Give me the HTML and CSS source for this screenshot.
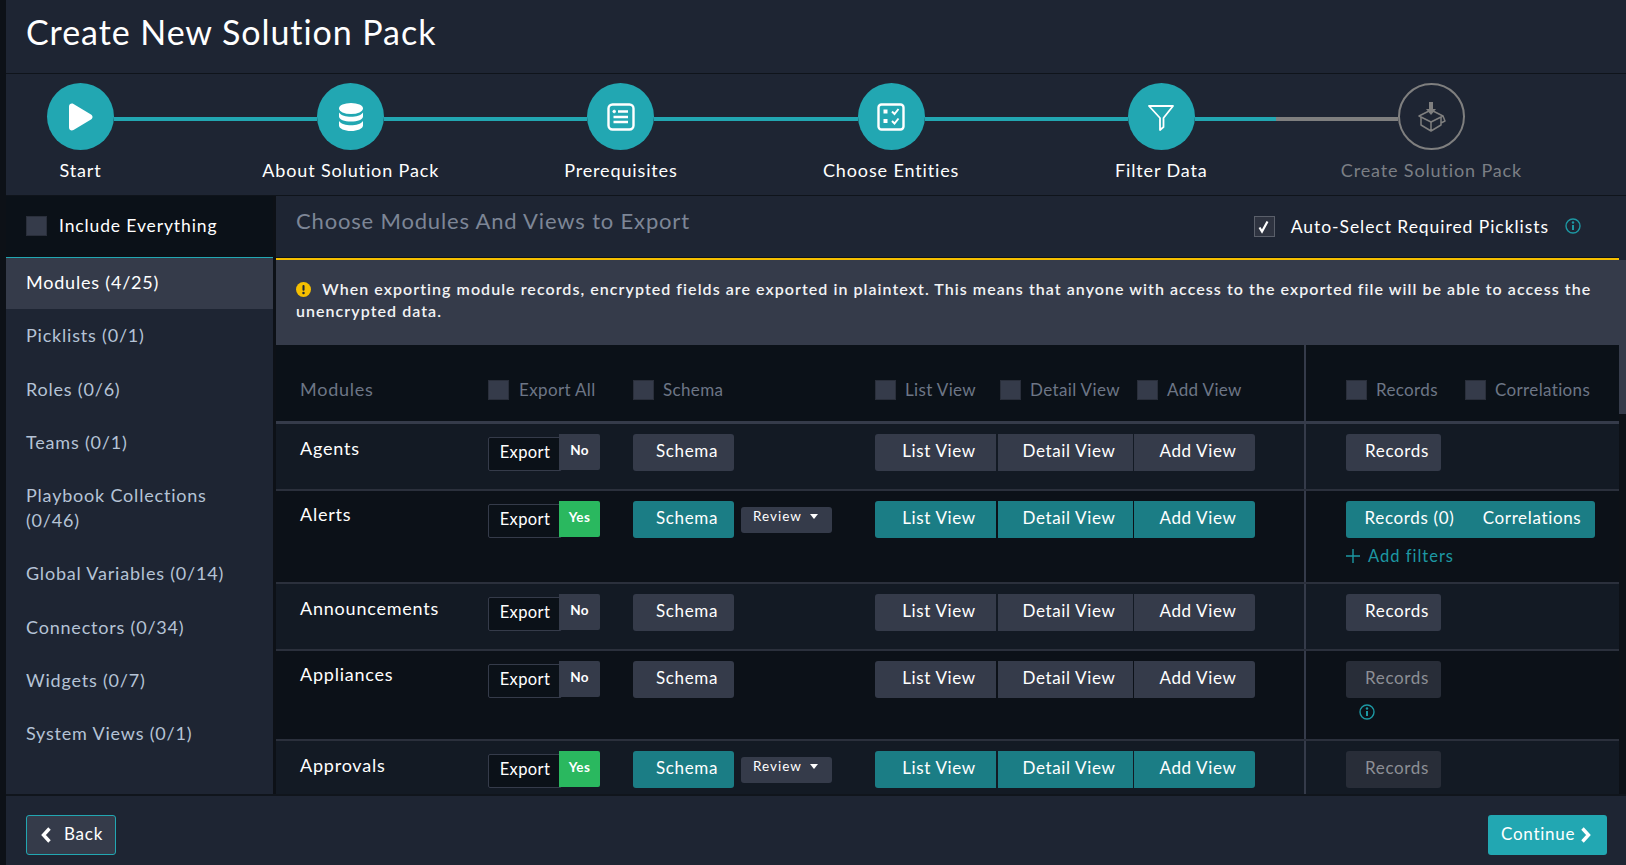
FILE: index.html
```html
<!DOCTYPE html>
<html lang="en">
<head>
<meta charset="utf-8">
<title>Create New Solution Pack</title>
<link rel="stylesheet" href="styles.css">
</head>
<body>
<div class="app">
  <header class="top"><h1>Create New Solution Pack</h1></header>

  <nav class="steps">
    <div class="step">
      <div class="track"><span class="circle"><svg viewBox="0 0 25 28" width="25" height="28"><path d="M1 3.500C1 1 3.500-.2 5.500 1L23 11.500c2 1.300 2 3.700 0 5L5.500 27c-2 1.200-4.500 0-4.500-2.500z" fill="#fff"/></svg></span><span class="line"></span></div>
      <div class="step-label">Start</div>
    </div>
    <div class="step">
      <div class="track"><span class="circle"><svg viewBox="0 0 24 28" width="24" height="28" fill="#fff"><ellipse cx="12" cy="5.500" rx="12" ry="5.500"/><path d="M0 9.500c2 3 7 4.300 12 4.300s10-1.300 12-4.300v4c0 3-5.500 5-12 5s-12-2-12-5z"/><path d="M0 18c2 3 7 4.200 12 4.200S22 21 24 18v4.500c0 3-5.500 5.500-12 5.500S0 25.500 0 22.500z"/></svg></span><span class="line"></span></div>
      <div class="step-label">About Solution Pack</div>
    </div>
    <div class="step">
      <div class="track"><span class="circle"><svg viewBox="0 0 28 28" width="28" height="28" fill="none" stroke="#fff" stroke-width="2.400"><rect x="1.500" y="1.500" width="25" height="25" rx="4"/><path d="M11 8.500h10M6.500 14h14.500M6.500 19h14.500"/><circle cx="7.200" cy="8.500" r="1.300" fill="#fff" stroke-width="1"/></svg></span><span class="line"></span></div>
      <div class="step-label">Prerequisites</div>
    </div>
    <div class="step">
      <div class="track"><span class="circle"><svg viewBox="0 0 28 28" width="28" height="28" fill="none" stroke="#fff" stroke-width="2.400"><rect x="1.500" y="1.500" width="25" height="25" rx="3"/><path d="M15 8.500l2.500 2.500 4-5M15 18l2.500 2.500 4-5" stroke-width="2"/><path d="M6.500 6.500h4v4h-4zM6.500 16h4v4h-4z" fill="#fff" stroke="none"/></svg></span><span class="line"></span></div>
      <div class="step-label">Choose Entities</div>
    </div>
    <div class="step">
      <div class="track"><span class="circle"><svg viewBox="0 0 28 28" width="28" height="28" fill="none" stroke="#fff" stroke-width="1.800" stroke-linejoin="round"><path d="M2 3h24L16.500 15v9l-3.500 3V15z"/></svg></span><span class="line line-part"></span></div>
      <div class="step-label">Filter Data</div>
    </div>
    <div class="step step-off">
      <div class="track"><span class="circle circle-off"><svg viewBox="0 0 30 30" width="30" height="30" fill="none" stroke="#7f7f7f" stroke-width="1.500" stroke-linejoin="round"><path d="M3 14l12-6 12 6-12 6z"/><path d="M5 15v8l10 6v-9M25 15v8l-10 6M27 14l2 5-4 2"/><path d="M15 0v8" stroke-width="4"/><path d="M10 7h10l-5 6z" fill="#7f7f7f" stroke="none"/></svg></span></div>
      <div class="step-label">Create Solution Pack</div>
    </div>
  </nav>

  <div class="content">
    <aside class="side">
      <label class="include"><span class="box"></span><span>Include Everything</span></label>
      <ul class="side-list">
        <li class="active">Modules (4/25)</li>
        <li>Picklists (0/1)</li>
        <li>Roles (0/6)</li>
        <li>Teams (0/1)</li>
        <li>Playbook Collections (0/46)</li>
        <li>Global Variables (0/14)</li>
        <li>Connectors (0/34)</li>
        <li>Widgets (0/7)</li>
        <li>System Views (0/1)</li>
      </ul>
    </aside>

    <main class="main">
      <div class="main-inner">
        <div class="main-head">
          <h2>Choose Modules And Views to Export</h2>
          <label class="auto"><span class="box box-on"><svg viewBox="0 0 16 16" width="16" height="16"><path d="M3.500 9.500l2.500 4L11.500 3.500" fill="none" stroke="#fff" stroke-width="2.200"/></svg></span><span class="auto-text">Auto-Select Required Picklists</span><svg class="info" viewBox="0 0 16 16" width="16" height="16"><circle cx="8" cy="8" r="7" fill="none" stroke="currentColor" stroke-width="1.400"/><path d="M8 7v5" stroke="currentColor" stroke-width="2"/><circle cx="8" cy="4.500" r="1.200" fill="currentColor"/></svg></label>
        </div>
        <div class="notice"><svg class="warn" viewBox="0 0 16 16" width="15" height="15"><circle cx="8" cy="8" r="8" fill="#f5bf00"/><rect x="6.900" y="3.200" width="2.200" height="6" rx="1" fill="#1e2533"/><circle cx="8" cy="11.700" r="1.300" fill="#1e2533"/></svg>When exporting module records, encrypted fields are exported in plaintext. This means that anyone with access to the exported file will be able to access the unencrypted data.</div>

        <div class="table">
          <div class="row row-head">
            <div class="cell head-name">Modules</div>
            <div class="cell head-cell"><label class="chk chk-all"><span class="box"></span>Export All</label></div>
            <div class="cell head-cell"><label class="chk"><span class="box"></span>Schema</label></div>
            <div class="cell head-cell views-head"><label class="chk chk-list"><span class="box"></span>List View</label><label class="chk chk-detail"><span class="box"></span>Detail View</label><label class="chk"><span class="box"></span>Add View</label></div>
            <div class="cell head-cell last"><label class="chk chk-rec"><span class="box"></span>Records</label><label class="chk"><span class="box"></span>Correlations</label></div>
          </div>

          <div class="row row-odd row-a">
            <div class="cell name">Agents</div>
            <div class="cell"><div class="toggle"><span class="t-label">Export</span><span class="t-val">No</span></div></div>
            <div class="cell"><span class="btn btn-schema">Schema</span></div>
            <div class="cell"><div class="views"><span class="btn v-list">List View</span><span class="btn v-detail">Detail View</span><span class="btn v-add">Add View</span></div></div>
            <div class="cell last"><span class="btn btn-rec">Records</span></div>
          </div>

          <div class="row row-even row-b">
            <div class="cell name">Alerts</div>
            <div class="cell"><div class="toggle"><span class="t-label">Export</span><span class="t-val t-yes">Yes</span></div></div>
            <div class="cell schema-cell"><span class="btn btn-schema on">Schema</span><span class="review">Review<i class="caret"></i></span></div>
            <div class="cell"><div class="views"><span class="btn v-list on">List View</span><span class="btn v-detail on">Detail View</span><span class="btn v-add on">Add View</span></div></div>
            <div class="cell last">
              <div class="views"><span class="btn btn-rec0 on">Records (0)</span><span class="btn btn-cor on">Correlations</span></div>
              <div class="filters"><svg viewBox="0 0 14 14" width="14" height="14"><path d="M7 0v14M0 7h14" stroke="currentColor" stroke-width="1.400"/></svg>Add filters</div>
            </div>
          </div>

          <div class="row row-odd row-a">
            <div class="cell name">Announcements</div>
            <div class="cell"><div class="toggle"><span class="t-label">Export</span><span class="t-val">No</span></div></div>
            <div class="cell"><span class="btn btn-schema">Schema</span></div>
            <div class="cell"><div class="views"><span class="btn v-list">List View</span><span class="btn v-detail">Detail View</span><span class="btn v-add">Add View</span></div></div>
            <div class="cell last"><span class="btn btn-rec">Records</span></div>
          </div>

          <div class="row row-even row-c">
            <div class="cell name">Appliances</div>
            <div class="cell"><div class="toggle"><span class="t-label">Export</span><span class="t-val">No</span></div></div>
            <div class="cell"><span class="btn btn-schema">Schema</span></div>
            <div class="cell"><div class="views"><span class="btn v-list">List View</span><span class="btn v-detail">Detail View</span><span class="btn v-add">Add View</span></div></div>
            <div class="cell last">
              <span class="btn btn-rec off">Records</span>
              <svg class="info info-rec" viewBox="0 0 16 16" width="16" height="16"><circle cx="8" cy="8" r="7" fill="none" stroke="currentColor" stroke-width="1.400"/><path d="M8 7v5" stroke="currentColor" stroke-width="2"/><circle cx="8" cy="4.500" r="1.200" fill="currentColor"/></svg>
            </div>
          </div>

          <div class="row row-odd row-a">
            <div class="cell name">Approvals</div>
            <div class="cell"><div class="toggle"><span class="t-label">Export</span><span class="t-val t-yes">Yes</span></div></div>
            <div class="cell schema-cell"><span class="btn btn-schema on">Schema</span><span class="review">Review<i class="caret"></i></span></div>
            <div class="cell"><div class="views"><span class="btn v-list on">List View</span><span class="btn v-detail on">Detail View</span><span class="btn v-add on">Add View</span></div></div>
            <div class="cell last"><span class="btn btn-rec off">Records</span></div>
          </div>
        </div>
      </div>
      <div class="scrollbar"><span class="thumb"></span></div>
    </main>
  </div>

  <footer class="foot">
    <button class="f-btn f-back"><svg viewBox="0 0 12 18" width="12" height="18"><path d="M9.500 2.500L3.500 9l6 6.500" fill="none" stroke="#fff" stroke-width="3.400"/></svg>Back</button>
    <button class="f-btn f-next">Continue<svg viewBox="0 0 12 18" width="12" height="18"><path d="M2.500 2.500l6 6.500-6 6.500" fill="none" stroke="#fff" stroke-width="3.400"/></svg></button>
  </footer>
</div>
</body>
</html>
```

FILE: styles.css
```css
* { box-sizing: border-box; }
html, body { margin: 0; height: 100%; overflow: hidden; }
body { background: #0d1117; font-family: Lato, "Open Sans", sans-serif; color: #fff; }
.app { height: 865px; margin-left: 6px; display: flex; flex-direction: column; background: #1e2533; }

.top { height: 74px; flex: none; padding: 11px 20px 0; border-bottom: 1px solid #0f141b; }
.top h1 { margin: 0; font-size: 34px; line-height: 41px; font-weight: 400; letter-spacing: 0.94px; }

.steps { height: 122px; flex: none; display: grid; grid-template-columns: repeat(5, 270.2px) 67px; padding: 9px 0 0 41px; border-bottom: 1px solid #0f141b; }
.step { display: flex; flex-direction: column; align-items: flex-start; }
.track { display: flex; width: 100%; height: 67px; }
.circle { flex: none; width: 67px; height: 67px; border-radius: 50%; background: #22a7b2; display: flex; align-items: center; justify-content: center; }
.circle-off { background: transparent; border: 2px solid #7f7f7f; }
.line { flex: 1; height: 4px; margin-top: 34px; background: #22a7b2; }
.line-part { background: linear-gradient(to right, #22a7b2 81px, #7f7f7f 81px); }
.step-label { width: 67px; display: flex; justify-content: center; white-space: nowrap; margin-top: 8px; font-size: 18px; line-height: 24px; letter-spacing: 0.86px; }
.step-off .step-label { color: #7b7f85; }

.content { flex: 1; min-height: 0; display: flex; background: #0d1117; }
.side { width: 267px; flex: none; background: #1e2533; display: flex; flex-direction: column; }
.include { height: 62px; flex: none; padding: 0 0 2px 20px; background: #0b1118; border-bottom: 1px solid #22a7b2; display: flex; align-items: center; gap: 12px; font-size: 17.500px; letter-spacing: 0.88px; }
.box { flex: none; width: 21px; height: 20px; background: #353b4a; border: 1px solid #2a2f3b; display: inline-flex; align-items: center; justify-content: center; }
.box-on { background: #2e3340; border-color: #5a5f6a; height: 21px; }
.side-list { list-style: none; margin: 0; padding: 0; }
.side-list li { padding: 14.300px 20px 14px; font-size: 18px; line-height: 25px; letter-spacing: 0.8px; color: #b5c3d6; }
.side-list li.active { background: #353b4a; color: #fff; padding: 12px 20px 14px; }

.main { flex: 1; min-width: 0; margin-left: 3px; display: flex; background: #1e2533; }
.main-inner { flex: 1; min-width: 0; display: flex; flex-direction: column; overflow: hidden; }
.main-head { height: 64px; flex: none; padding: 0 0 2px 20px; border-bottom: 2px solid #f5bf00; box-shadow: inset 0 -1px 0 #0f141b; display: flex; justify-content: space-between; }
.main-head h2 { margin: 11px 0 0; font-size: 22px; line-height: 28px; font-weight: 400; letter-spacing: 0.83px; color: #7d8696; }
.auto { display: flex; align-items: center; height: 60px; padding: 0 38px 0 0; font-size: 17.500px; letter-spacing: 0.95px; }
.auto-text { margin: 0 16px; }
.info { color: #1d98a3; flex: none; }
.notice { flex: none; height: 85px; padding: 18px 24px 0 20px; background: #353b4a; font-size: 16px; line-height: 22px; letter-spacing: 1.05px; font-weight: 600; color: #f2f3f5; }
.warn { margin-right: 11px; vertical-align: -2px; }

.table { flex: 1; min-height: 0; overflow: hidden; background: #0b1118; }
.row { display: grid; grid-template-columns: 212px 145px 242px 429px 1fr; }
.cell { padding-top: 10px; }
.last { padding-left: 40px; border-left: 2px solid #353b4a; }
.row-head { height: 79px; border-bottom: 3px solid #353b4a; }
.row-head .cell { padding-top: 35px; height: 76px; }
.row-head .head-name { padding: 33px 0 0 24px; font-size: 18px; line-height: 22px; letter-spacing: 0.75px; color: #6d7686; }
.head-cell { display: flex; align-items: flex-start; }
.chk { display: flex; align-items: center; gap: 9px; font-size: 17px; line-height: 20px; letter-spacing: 0.36px; color: #6d7686; }
.chk-all { gap: 10px; }
.chk-list { width: 125px; }
.chk-detail { width: 137px; }
.chk-rec { width: 119px; }
.row-odd { background: #131a24; }
.row-even { background: #0c1118; }
.row-a { height: 67px; border-bottom: 2px solid #2b303c; }
.row-b { height: 93px; border-bottom: 2px solid #2b303c; }
.row-c { height: 90px; border-bottom: 2px solid #2b303c; }
.row .name { padding: 13px 0 0 24px; font-size: 18px; line-height: 22px; letter-spacing: 0.78px; }
.row-even .name { padding-top: 12px; }

.toggle { display: flex; align-items: flex-start; }
.t-label { width: 74px; height: 34px; margin-top: 3px; border: 1px solid #353b4a; border-radius: 2px; background: #0b1118; display: flex; align-items: center; justify-content: center; font-size: 16.500px; letter-spacing: 0.4px; padding: 0 0 4px 0; }
.t-val { width: 41px; height: 36px; margin-left: -3px; background: #353b4a; border-radius: 0 2px 2px 0; display: flex; align-items: center; justify-content: center; font-size: 13.500px; font-weight: 700; letter-spacing: 0.4px; padding-bottom: 4px; }
.t-yes { background: #2ab85f; }

.btn { display: inline-flex; align-items: center; justify-content: center; height: 37px; background: #353b4a; border-radius: 3px; font-size: 17px; letter-spacing: 0.65px; padding: 0 0 4px 7px; }
.btn.on { background: #1b7d85; }
.btn.off { background: #282d38; color: #8c8f95; }
.btn-schema { width: 101px; }
.schema-cell { display: flex; align-items: flex-start; gap: 7px; }
.review { margin-top: 6px; width: 91px; height: 26px; background: #353b4a; border-radius: 3px; display: flex; align-items: center; justify-content: center; gap: 8px; font-size: 13.500px; letter-spacing: 1px; padding: 0 2px 8px 0; }
.caret { width: 0; height: 0; border-left: 4.500px solid transparent; border-right: 4.500px solid transparent; border-top: 5px solid #fff; }
.views { display: flex; }
.v-list { width: 121px; border-radius: 3px 0 0 3px; margin-right: 2px; }
.v-detail { width: 135px; border-radius: 0; margin-right: 1px; }
.v-add { width: 121px; border-radius: 0 3px 3px 0; }
.btn-rec { width: 95px; }
.btn-rec0 { width: 120px; border-radius: 3px 0 0 3px; }
.btn-cor { width: 129px; border-radius: 0 3px 3px 0; padding-left: 3px; }
.filters { display: flex; align-items: center; gap: 8px; margin-top: 6px; color: #1d98a3; font-size: 16.500px; line-height: 24px; letter-spacing: 1px; }
.info-rec { display: block; margin: 6px 0 0 13px; }

.scrollbar { width: 7px; flex: none; margin-top: 64px; background: #0d1117; }
.thumb { display: block; height: 154px; background: #353b4a; }

.foot { height: 71px; flex: none; border-top: 2px solid #10151c; padding: 19px 19px 0 20px; display: flex; justify-content: space-between; align-items: flex-start; }
.f-btn { height: 40px; font-family: inherit; color: #fff; font-size: 17px; letter-spacing: 0.75px; border-radius: 3px; display: flex; align-items: center; padding-bottom: 4px; }
.f-btn svg { margin-top: 3px; }
.f-back { width: 90px; padding-left: 13px; padding-right: 0; gap: 12px; background: #353b4a; border: 1px solid #22a7b2; }
.f-next { width: 119px; padding-left: 13px; padding-right: 0; gap: 5px; background: #22a7b2; border: 0; }
```
